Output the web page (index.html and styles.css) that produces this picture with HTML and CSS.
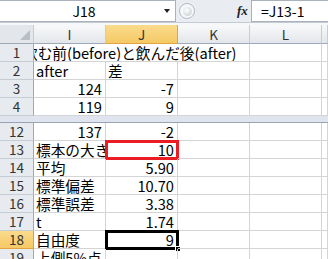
FILE: index.html
```html
<!doctype html>
<html>
  <head>
    <title>Sheet</title>
    <meta charset="utf-8">
    <link rel="stylesheet" href="styles.css">
  </head>
  <body>
    <div class=fbar>
      <div class=namebox><span class=ref>J18</span><span class=drop></span></div>
      <div class=knob><span></span></div>
      <div class=fx>fx</div>
      <div class=formula>=J13-1</div>
    </div>
    <div class=gap></div>

    <div class="grid head">
      <div class=corner></div>
      <div class=ch>I</div>
      <div class="ch sel">J</div>
      <div class=ch>K</div>
      <div class=ch>L</div>
      <div class=ch></div>
    </div>

    <div class=grid>
      <div class=rh>1</div>
      <div class="c wide"><span class=title>飲む前(before)と飲んだ後(after)</span></div>
      <div class=c></div>
      <div class=c></div>

      <div class=rh>2</div>
      <div class=c>after</div>
      <div class=c>差</div>
      <div class=c></div><div class=c></div><div class=c></div>

      <div class=rh>3</div>
      <div class="c num">124</div>
      <div class="c num">-7</div>
      <div class=c></div><div class=c></div><div class=c></div>

      <div class=rh>4</div>
      <div class="c num">119</div>
      <div class="c num">9</div>
      <div class=c></div><div class=c></div><div class=c></div>
    </div>

    <div class=split></div>

    <div class=grid>
      <div class=rh>12</div>
      <div class="c num">137</div>
      <div class="c num">-2</div>
      <div class=c></div><div class=c></div><div class=c></div>

      <div class=rh>13</div>
      <div class=c>標本の大きさ</div>
      <div class="c num">10<i class=mark></i></div>
      <div class=c></div><div class=c></div><div class=c></div>

      <div class=rh>14</div>
      <div class=c>平均</div>
      <div class="c num">5.90</div>
      <div class=c></div><div class=c></div><div class=c></div>

      <div class=rh>15</div>
      <div class=c>標準偏差</div>
      <div class="c num">10.70</div>
      <div class=c></div><div class=c></div><div class=c></div>

      <div class=rh>16</div>
      <div class=c>標準誤差</div>
      <div class="c num">3.38</div>
      <div class=c></div><div class=c></div><div class=c></div>

      <div class=rh>17</div>
      <div class=c>t</div>
      <div class="c num">1.74</div>
      <div class=c></div><div class=c></div><div class=c></div>

      <div class="rh sel">18</div>
      <div class=c>自由度</div>
      <div class="c num">9<i class=cursor><b></b></i></div>
      <div class=c></div><div class=c></div><div class=c></div>

      <div class=rh>19</div>
      <div class=c>上側5%点</div>
      <div class=c></div>
      <div class=c></div><div class=c></div><div class=c></div>
    </div>
  </body>
</html>
```

FILE: styles.css
```css
* {
  box-sizing: border-box;
  margin: 0;
  padding: 0;
}

body {
  width: 328px;
  height: 259px;
  overflow: hidden;
  background: #fff;
  font-family: "Noto Sans CJK JP", sans-serif;
  font-size: 14.67px;
  color: #000;
}

/* formula bar */

.fbar {
  display: flex;
  height: 22px;
  background: #e9ecf0;
}

.namebox {
  width: 176px;
  height: 22px;
  display: flex;
  align-items: center;
  background: #fff;
  border: 1px solid #a9b1bc;
  border-left: none;
  font-size: 14px;
  line-height: 20px;
}

.ref {
  flex: 1;
  text-align: center;
  padding-left: 4px;
}

.drop {
  width: 0;
  height: 0;
  margin: 0 5px 0 0;
  border-left: 3px solid transparent;
  border-right: 3px solid transparent;
  border-top: 4px solid #222;
}

.knob {
  width: 16px;
  height: 16px;
  margin: 3px 0 0 3px;
  border-radius: 50%;
  border: 1px solid #b3bac4;
  background: #f7f8fa;
  display: flex;
  align-items: center;
  justify-content: center;
}

.knob span {
  width: 9px;
  height: 9px;
  border-radius: 50%;
  background: radial-gradient(circle at 40% 35%, #fff, #c3c8cf);
}

.fx {
  margin-left: auto;
  width: 14px;
  font: italic bold 13px "Liberation Serif", serif;
  line-height: 21px;
  color: #222;
}

.formula {
  width: 77px;
  height: 22px;
  background: #fff;
  border: 1px solid #a9b1bc;
  border-right: none;
  padding-left: 9px;
  font-size: 14px;
  line-height: 20px;
}

.gap {
  height: 3px;
  border-top: 1px solid #c5cbd3;
  background: #f6f7f9;
}

/* grid */

.grid {
  display: grid;
  grid-template-columns: 34px 72px 72px 72px 72px 1fr;
  grid-auto-rows: 18px;
}

.grid.head {
  grid-auto-rows: 19px;
}

.corner, .ch {
  background: linear-gradient(#f8f9fa, #e3e6ea);
  border-right: 1px solid #c6ccd4;
  border-bottom: 1px solid #9eaab9;
  text-align: center;
  font-size: 13.5px;
  line-height: 18px;
  color: #333;
}

.corner {
  position: relative;
  background: #e3e6ea;
}

.corner::after {
  content: "";
  position: absolute;
  right: 3px;
  bottom: 3px;
  border-left: 10px solid transparent;
  border-bottom: 10px solid #b9bec5;
}

.ch.sel {
  background: linear-gradient(#fadb8c, #f5c965);
  border-right-color: #e2a43f;
  border-bottom-color: #e2a43f;
}

.rh {
  background: #e7eaee;
  border-right: 1px solid #9eaab9;
  border-bottom: 1px solid #c6ccd4;
  text-align: center;
  font-size: 13.5px;
  line-height: 17px;
  color: #333;
}

.rh.sel {
  background: linear-gradient(#fadb8c, #f5c965);
  border-bottom-color: #e2a43f;
}

.c {
  position: relative;
  border-right: 1px solid #d4d4d4;
  border-bottom: 1px solid #d4d4d4;
  padding: 0 3px 0 2px;
  line-height: 17px;
  white-space: nowrap;
  overflow: hidden;
}

.c.num {
  text-align: right;
  overflow: visible;
}

.c.wide {
  grid-column: span 3;
}

.title {
  display: inline-block;
  margin-left: -13px;
}

.split {
  height: 7px;
  background: #dfe4ee;
  border-bottom: 1px solid #98a3b3;
}

.mark, .cursor {
  position: absolute;
  top: -1px;
  left: -1px;
  right: -2px;
  bottom: -2px;
  border: 3px solid #ec1c24;
}

.cursor {
  border-color: #000;
}

.cursor b {
  position: absolute;
  right: -5px;
  bottom: -5px;
  width: 6px;
  height: 6px;
  background: #000;
  border: 1px solid #fff;
}
```
